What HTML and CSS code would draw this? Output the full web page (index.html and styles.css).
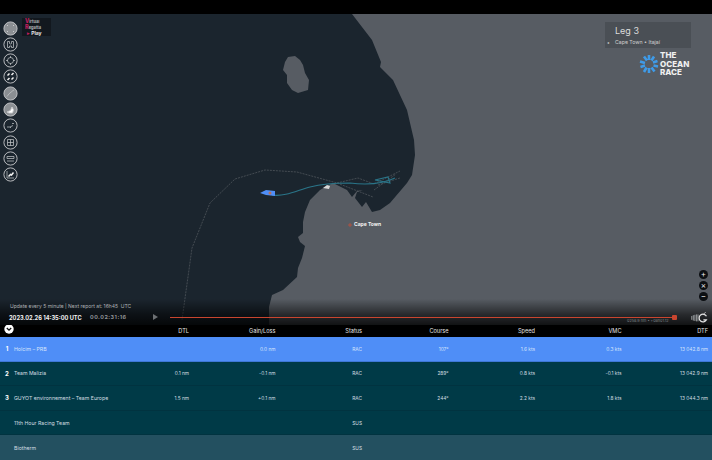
FILE: index.html
```html
<!DOCTYPE html>
<html lang="en">
<head>
    <meta charset="UTF-8">
    <meta name="viewport" content="width=device-width, initial-scale=1.0">
    <title>Virtual Regatta Play - Leg 3</title>
    <link rel="stylesheet" href="styles.css">
</head>
<body>
    <div class="top-bar"></div>

    <div class="map">
        <svg class="map-canvas" viewBox="0 14 712 311" width="712" height="311">
            <rect x="0" y="14" width="712" height="311" fill="#1b252e"/>
            <!-- land -->
            <path fill="#575c63" d="M352 14 L372 40 L381 62 L380 67 L393 80 L407 110 L414 140 L415 155 L412 175 L407 183 L390 203 L380 210 L372 212 L366 202 L362 207 L355 198 L357 192 L363 190 L357 191 L352 197 L347 190 L333 183 L325 187 L320 190 L310 200 L305 212 L303 222 L303 233 L298 237 L300 242 L305 246 L302 258 L298 268 L297 277 L283 290 L272 295 L269 307 L269 325 L712 325 L712 14 Z"/>
            <path fill="#575c63" d="M288 57 L295 56 L300 60 L303 65 L305 73 L309 80 L308 90 L298 93 L292 90 L287 83 L287 75 L283 70 L285 62 Z"/>
            <!-- routes -->
            <path class="route" d="M182 320 L192 248 L210 203 L235 179 L265 170 L297 172 L337 183 L373 197"/>
            <path class="route" d="M337 183 L358 178 L374 184 L400 171"/>
            <path class="route" d="M374 190 L396 174 M378 185 L400 178"/>
            <path class="track" d="M272 195 C285 197 298 190 310 187 C325 183 340 183 350 183 C365 185 380 185 395 178"/>
            <path class="track" d="M375 180 L390 183 L388 177 Z"/>
            <!-- boats -->
            <path fill="#4f8ef7" d="M260 193 L266 190 L275 191 L275 196 L266 195 Z"/>
            <circle cx="270" cy="193" r="1.5" fill="#b5705c"/>
            <path fill="#d8d8d8" d="M323 188 L327 185 L330 186 L329 189 Z"/>
            <path d="M348 225 h4 M350 223 v4" stroke="#c0503c" stroke-width="0.8"/>
        </svg>

        <div class="map-fade"></div>

        <div class="toolbar">
            <svg class="tool tool-filled" viewBox="0 0 15 15"><circle cx="7.5" cy="7.5" r="6.6"/><path class="glyph-dark" d="M4 4.5h1M10 4.5h1M4 10.5h1M10 10.5h1"/></svg>
            <svg class="tool" viewBox="0 0 15 15"><circle cx="7.5" cy="7.5" r="6.6"/><path class="glyph" d="M4.5 4.5h2v2l1 .5 1-.5v-2h2v6h-2v-1.5h-2v1.5h-2z"/></svg>
            <svg class="tool" viewBox="0 0 15 15"><circle cx="7.5" cy="7.5" r="6.6"/><circle class="glyph" cx="7.5" cy="7.5" r="3"/><path class="glyph" d="M7.5 3v2M7.5 10v2M3 7.5h2M10 7.5h2"/></svg>
            <svg class="tool" viewBox="0 0 15 15"><circle cx="7.5" cy="7.5" r="6.6"/><path class="glyph-thick" d="M8.5 6l2-2M4.5 6.5l2-2M8.5 10.5l2-2M4.5 11l2-2"/></svg>
            <svg class="tool tool-filled" viewBox="0 0 15 15"><circle cx="7.5" cy="7.5" r="6.6"/><path class="glyph" d="M4 10.5c1-1 1-2 3-3.5s2-2 4-3"/></svg>
            <svg class="tool tool-filled" viewBox="0 0 15 15"><circle cx="7.5" cy="7.5" r="6.6"/><path fill="#fff" d="M4 10l3.5-1.5L9 5l1.500 3-1 3H6z"/></svg>
            <svg class="tool" viewBox="0 0 15 15"><circle cx="7.5" cy="7.5" r="6.6"/><path class="glyph" d="M4 9h3l3-1.500M8 10l-1-1M9 5.500h2"/></svg>
            <svg class="tool" viewBox="0 0 15 15"><circle cx="7.5" cy="7.5" r="6.6"/><path class="glyph" d="M4.500 4.500h6v6h-6zM7.500 4.500v6M4.500 7.500h6"/></svg>
            <svg class="tool" viewBox="0 0 15 15"><circle cx="7.5" cy="7.5" r="6.6"/><path class="glyph" d="M4 5.500h7v2H4zM4 10h7"/></svg>
            <svg class="tool" viewBox="0 0 15 15"><circle cx="7.5" cy="7.5" r="6.6"/><path class="glyph" d="M4 4v7h7"/><path class="glyph-thick" d="M5.500 9.500l2-2 1 .5 2-2.500"/></svg>
        </div>

        <div class="vr-logo">
            <div class="vr-line"><span class="vr-letter">V</span>irtual</div>
            <div class="vr-line"><span class="vr-letter">R</span>egatta</div>
            <div class="vr-line vr-play"><span class="vr-arrow">▸</span> Play</div>
        </div>

        <div class="leg-panel">
            <div class="leg-title">Leg 3</div>
            <div class="leg-route"><span class="leg-arrow">◂</span>Cape Town • Itajaí</div>
        </div>

        <div class="race-logo">
            <svg class="race-mark" viewBox="0 0 20 20" width="20" height="22">
                <path class="race-rays" d="M10 1v5M15 2.500l-2.500 4M18.500 7l-4.500 1.500M19 12.500l-4.500-1M15.500 17.500l-3-4M10 19v-5M5 18l2.500-4.500M1.500 13l4.500-1.500M1 7.500l5 1.500M5 2.500l3 4"/>
            </svg>
            <div class="race-name">THE<br>OCEAN<br>RACE</div>
        </div>

        <div class="place-label">Cape Town</div>

        <div class="zoom-controls">
            <span class="zoom-btn">+</span>
            <span class="zoom-btn">×</span>
            <span class="zoom-btn">−</span>
        </div>

        <div class="timeline">
            <div class="update-note">Update every 5 minute | Next report at: 16h45&nbsp; UTC</div>
            <div class="time-row">
                <span class="time-date">2023.02.26 14:35:00 UTC</span>
                <span class="time-elapsed">00.02:31:16</span>
                <span class="time-play"></span>
                <div class="time-bar"><span class="time-knob"></span></div>
                <svg class="g-logo" viewBox="0 0 22 14" width="17" height="11">
                    <path d="M1 5v5M3 4v7M5 3.500v8M7 3v9M9 3v9" stroke="#b9bcbf" stroke-width="1"/>
                    <path d="M20 5.500a5 5 0 1 0 0 4.500h-4" fill="none" stroke="#e4e4e4" stroke-width="1.600"/>
                    <path d="M16 3l3-3" stroke="#e4e4e4" stroke-width="1"/>
                </svg>
            </div>
            <div class="time-sub">0258.9 nm • +08h01.12</div>
        </div>
    </div>

    <div class="ranking">
        <div class="rank-row rank-head">
            <span class="toggle">
                <svg viewBox="0 0 10 10" width="10" height="10"><circle cx="5" cy="5" r="4.700" fill="#fff"/><path d="M2.800 4l2.200 2.200L7.200 4" fill="none" stroke="#111" stroke-width="1.300"/></svg>
            </span>
            <span></span><span>DTL</span><span>Gain/Loss</span><span>Status</span><span>Course</span><span>Speed</span><span>VMC</span><span>DTF</span>
        </div>
        <div class="rank-row rank-first">
            <b>1</b><span class="team">Holcim – PRB</span><span></span><span>0.0 nm</span><span>RAC</span><span>107°</span><span>1.6 kts</span><span>0.3 kts</span><span>13 042.8 nm</span>
        </div>
        <div class="rank-row">
            <b>2</b><span class="team">Team Malizia</span><span>0.1 nm</span><span>-0.1 nm</span><span>RAC</span><span>289°</span><span>0.8 kts</span><span>-0.1 kts</span><span>13 042.9 nm</span>
        </div>
        <div class="rank-row">
            <b>3</b><span class="team">GUYOT environnement – Team Europe</span><span>1.5 nm</span><span>+0.1 nm</span><span>RAC</span><span>244°</span><span>2.2 kts</span><span>1.8 kts</span><span>13 044.3 nm</span>
        </div>
        <div class="rank-row">
            <b></b><span class="team">11th Hour Racing Team</span><span></span><span></span><span>SUS</span><span></span><span></span><span></span><span></span>
        </div>
        <div class="rank-row rank-last">
            <b></b><span class="team">Biotherm</span><span></span><span></span><span>SUS</span><span></span><span></span><span></span><span></span>
        </div>
    </div>
</body>
</html>
```

FILE: styles.css
```css
html, body {
    margin: 0;
    padding: 0;
}
body {
    width: 712px;
    height: 460px;
    overflow: hidden;
    background: #000;
    font-family: Inter, "Liberation Sans", sans-serif;
    color: #fff;
}
.top-bar {
    height: 14px;
    background: #000;
}

/* map */
.map {
    position: relative;
    height: 311px;
    overflow: hidden;
}
.map-canvas {
    position: absolute;
    top: 0;
    left: 0;
    display: block;
}
.route {
    fill: none;
    stroke: #565b61;
    stroke-width: 0.7;
    stroke-dasharray: 2 1;
}
.track {
    fill: none;
    stroke: #2a7589;
    stroke-width: 1.1;
}
.map-fade {
    position: absolute;
    left: 0;
    right: 0;
    bottom: 0;
    height: 26px;
    background: linear-gradient(rgba(0,0,0,0), rgba(0,0,0,0.55) 60%, rgba(0,0,0,0.8));
}

.toolbar {
    position: absolute;
    top: 6.5px;
    left: 2.5px;
    display: flex;
    flex-direction: column;
    gap: 1.3px;
}
.tool {
    display: block;
    width: 15px;
    height: 15px;
    fill: none;
    stroke: #c9cbcd;
    stroke-width: 0.9;
}
.tool-filled {
    fill: #8b8f93;
}
.glyph {
    fill: none;
    stroke: #c9cbcd;
    stroke-width: 0.7;
}
.glyph-thick {
    fill: none;
    stroke: #f2f2f2;
    stroke-width: 1.5;
}
.glyph-dark {
    fill: none;
    stroke: #c9cbcd;
    stroke-width: 1;
}

.vr-logo {
    position: absolute;
    top: 4px;
    left: 22px;
    width: 29px;
    height: 18px;
    padding-left: 3px;
    box-sizing: border-box;
    background: #12181e;
    font-size: 4px;
    font-weight: 700;
    color: #b4b6b8;
}
.vr-line {
    height: 6px;
    line-height: 6px;
    overflow: hidden;
}
.vr-letter {
    color: #c01e5e;
    font-size: 5.5px;
    line-height: 6px;
    font-weight: 800;
}
.vr-play {
    padding-left: 2px;
    color: #e8e8e8;
    font-size: 5px;
}
.vr-arrow {
    color: #c01e5e;
}

.leg-panel {
    position: absolute;
    top: 8px;
    left: 605px;
    width: 86px;
    height: 26px;
    box-sizing: border-box;
    padding: 2px 0 0 10px;
    background: #4a4f55;
}
.leg-title {
    font-size: 9px;
    line-height: 14px;
    color: #dcdcdc;
}
.leg-route {
    position: relative;
    font-size: 5.2px;
    line-height: 9px;
    color: #d0d0d0;
}
.leg-arrow {
    position: absolute;
    left: -8px;
    font-size: 4px;
}

.race-logo {
    position: absolute;
    top: 37px;
    left: 639px;
    display: flex;
    align-items: center;
    gap: 1px;
}
.race-mark {
    display: block;
}
.race-rays {
    fill: none;
    stroke: #3f9be8;
    stroke-width: 2.6;
}
.race-name {
    font-size: 8px;
    font-weight: 800;
    line-height: 8.5px;
    color: #f0f0f0;
}

.place-label {
    position: absolute;
    top: 207px;
    left: 354px;
    font-size: 5px;
    line-height: 7px;
    font-weight: 700;
    color: #f2f2f2;
}

.zoom-controls {
    position: absolute;
    top: 256px;
    left: 699px;
    display: flex;
    flex-direction: column;
    gap: 2px;
}
.zoom-btn {
    display: block;
    width: 9px;
    height: 9px;
    border-radius: 50%;
    background: #0c0f12;
    font-size: 8px;
    line-height: 9px;
    text-align: center;
    color: #e8e8e8;
}

.timeline {
    position: absolute;
    left: 0;
    right: 0;
    top: 288px;
}
.update-note {
    padding-left: 10px;
    font-size: 5px;
    line-height: 8px;
    color: #aeb1b4;
}
.time-row {
    display: flex;
    align-items: center;
    height: 14px;
    padding-left: 9px;
}
.time-date {
    width: 81px;
    font-size: 5.7px;
    font-weight: 700;
    color: #f2f2f2;
    white-space: nowrap;
}
.time-elapsed {
    width: 60px;
    font-size: 5.4px;
    font-weight: 700;
    letter-spacing: 0.5px;
    color: #8f9396;
    white-space: nowrap;
}
.time-play {
    width: 0;
    height: 0;
    margin-left: 3px;
    border-left: 5px solid #6c7073;
    border-top: 3px solid transparent;
    border-bottom: 3px solid transparent;
}
.time-bar {
    position: relative;
    width: 507px;
    height: 1px;
    margin-left: 12px;
    background: #c9452f;
}
.time-knob {
    position: absolute;
    right: 0;
    top: -2px;
    width: 5px;
    height: 5px;
    border-radius: 1px;
    background: #c9452f;
}
.g-logo {
    margin-left: 14px;
    flex: none;
}
.time-sub {
    position: absolute;
    top: 16px;
    left: 627px;
    font-size: 3.8px;
    line-height: 6px;
    color: #7d8185;
    white-space: nowrap;
}

/* ranking table */
.ranking {
    height: 135px;
}
.rank-row {
    display: grid;
    grid-template-columns: 14px 88.5px repeat(7, 86.5px);
    align-items: center;
    height: 24.6px;
    box-sizing: border-box;
    background: #003a47;
    border-bottom: 1px solid #013340;
    font-size: 4.8px;
    color: #d4dfe2;
    text-align: right;
}
.rank-row b {
    font-size: 6px;
    text-align: center;
    color: #fff;
}
.rank-row .team {
    text-align: left;
    font-size: 5.2px;
    white-space: nowrap;
}
.rank-head {
    height: 12px;
    background: #000;
    border-bottom: 0;
    font-size: 5.6px;
    color: #e4e4e4;
}
.toggle {
    display: block;
    height: 10px;
    margin: -5px 0 0 3px;
}
.rank-first {
    background: #4f8ef7;
    border-bottom-color: #3f78d6;
    color: #d6e4fb;
}
.rank-last {
    background: #235060;
    border-bottom: 0;
}
```
